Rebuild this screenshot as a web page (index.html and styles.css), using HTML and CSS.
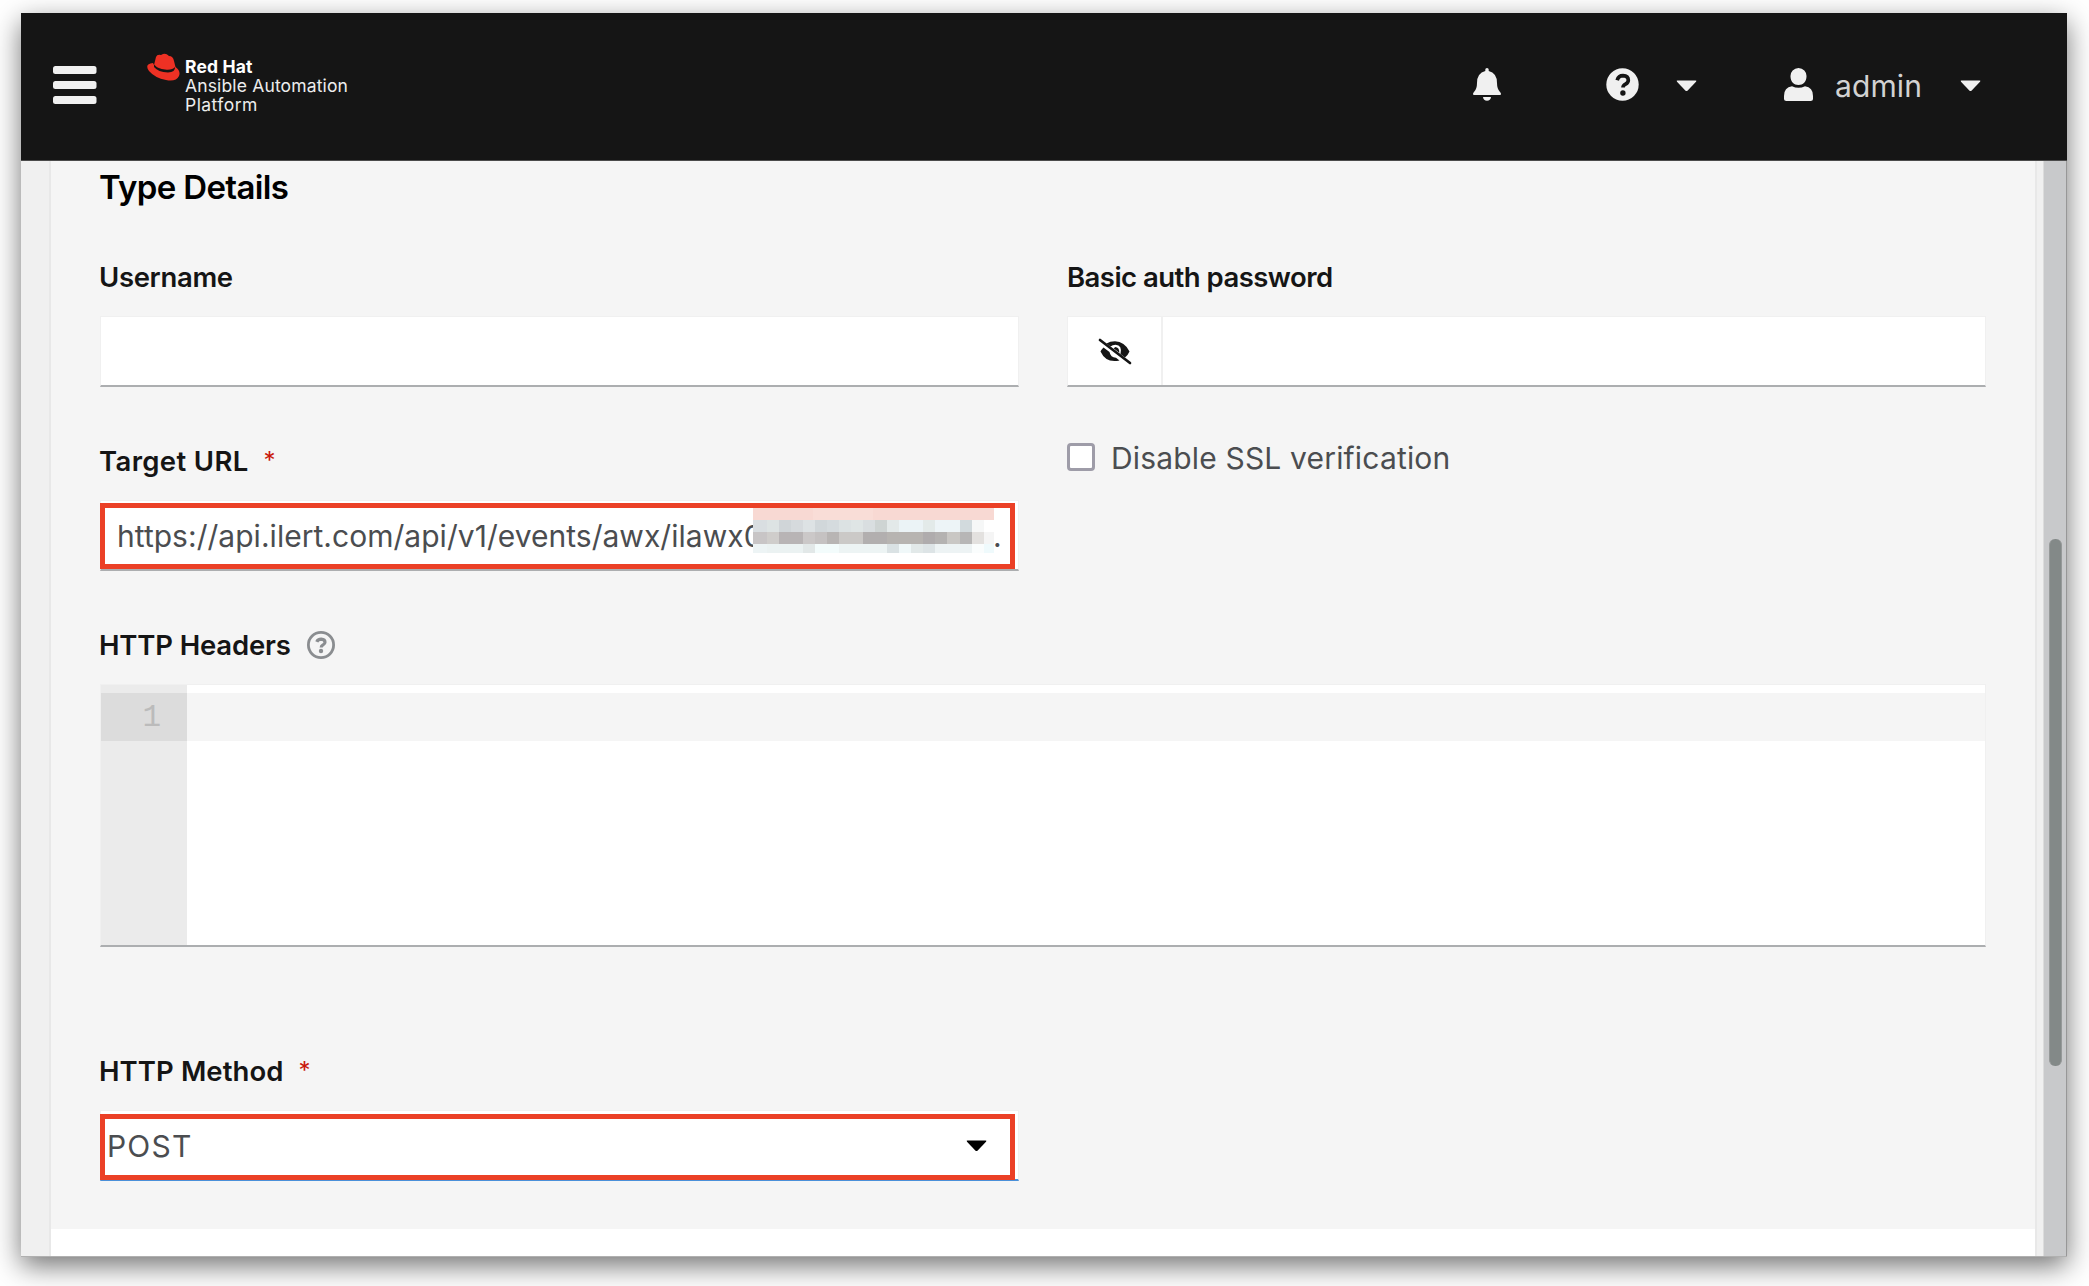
FILE: index.html
```html
<!DOCTYPE html>
<html lang="en">
<head>
<meta charset="utf-8">
<title>Red Hat Ansible Automation Platform</title>
<link rel="stylesheet" href="styles.css">
</head>
<body>
<div class="window">
  <header class="masthead">
    <svg class="menu" width="44" height="40" viewBox="0 0 44 40"><g fill="#f0f0f0"><rect y="1" width="43.500" height="8" rx="2.500"/><rect y="16" width="43.500" height="8" rx="2.500"/><rect y="31" width="43.500" height="8" rx="2.500"/></g></svg>
    <div class="brand">
      <svg class="hat" width="35" height="29" viewBox="0 0 35 29">
        <path fill="#ee3124" d="M8 12 L10 4 Q11 1 15 2 L17 1 Q20 0 23 3 Q27 3 28 8 L29.500 14 Q35 18 33 23 Q30 29 20 27 Q9 25 3 18 Q-2 11 7 10 Z"/>
        <path fill="#151515" d="M8 11.500 Q12 16 19 16.500 Q26 17.500 29 14 Q29.500 19 22 19.500 Q12 19 8 14 Z"/>
      </svg>
      <div class="brand-text"><b class="brand-name">Red Hat</b><span class="brand-line">Ansible Automation</span><span class="brand-last">Platform</span></div>
    </div>
    <div class="tools">
      <svg class="bell" width="28" height="33" viewBox="0 0 28 33"><path fill="#f0f0f0" d="M12.300 3V1.500Q12.300 0 14 0T15.700 1.500V3Q24 5 24 15Q24 21 27 24Q28 25 28 26Q28 27 27 27H1Q0 27 0 26Q0 25 1 24Q4 21 4 15Q4 5 12.300 3ZM10 29H18Q17.500 32.800 14 32.800T10 29Z"/></svg>
      <svg class="help" width="33" height="33" viewBox="0 0 33 33"><circle cx="16.500" cy="16.500" r="16.200" fill="#f0f0f0"/><path d="M11.200 12.200Q12.500 7.700 17 7.700Q22.300 8 22.300 12.200Q22.300 14.500 19.500 16.200Q17 17.500 17 19.600" fill="none" stroke="#151515" stroke-width="3.700"/><circle cx="16.900" cy="25" r="2.700" fill="#151515"/></svg>
      <svg class="caret caret-help" width="21" height="12" viewBox="0 0 21 12"><path fill="#f0f0f0" d="M1.500.5h18q1.500 0 .5 1.300l-8.300 8.700q-1.200 1-2.400 0L1 1.800Q0 .5 1.500.5z"/></svg>
      <svg class="user" width="29" height="33" viewBox="0 0 29 33"><path fill="#f0f0f0" d="M14.500 0a8 8 0 0 1 8 8.500c0 5-3.500 8.500-8 8.500s-8-3.500-8-8.500a8 8 0 0 1 8-8.500zM8 18.300q6.500 3 13 0q8 1 8 9.700v2.500q0 2.500-2.500 2.500h-24Q0 33 0 30.500V28q0-8.700 8-9.700z"/></svg>
      <span class="account">admin</span>
      <svg class="caret" width="21" height="12" viewBox="0 0 21 12"><path fill="#f0f0f0" d="M1.500.5h18q1.500 0 .5 1.300l-8.300 8.700q-1.200 1-2.400 0L1 1.800Q0 .5 1.500.5z"/></svg>
    </div>
  </header>
  <div class="viewport">
    <main class="panel">
      <section class="form">
        <h2 class="title">Type Details</h2>
        <div class="grid">
          <div class="field">
            <div class="label"><span class="l-username">Username</span></div>
            <div class="control"></div>
          </div>
          <div class="field">
            <div class="label"><span class="l-password">Basic auth password</span></div>
            <div class="control control-group">
              <div class="toggle"><svg width="34" height="27" viewBox="0 0 34 27"><path fill="#151515" d="M8.500 5.500Q12 3.300 17 3.300Q26.500 3.500 31.500 13.500Q30 17 27 19.500L22.500 16Q24.500 7 17.500 6.700Q14.500 6.800 12.500 8.600ZM17 9Q21.500 9.200 21.300 14.800L15.500 10.300Q17 10 17 9ZM5.500 9.500L11.500 14Q12.500 19.500 18 19.700L21.500 22.500Q8 25.500 2.500 13.500Q3.500 11.500 5.500 9.500Z"/><path d="M2 2L32 25" stroke="#151515" stroke-width="2.700" stroke-linecap="round"/></svg></div>
              <div class="secret"></div>
            </div>
          </div>
          <div class="field">
            <div class="label"><span class="l-target">Target URL</span><span class="required">*</span></div>
            <div class="control marked">
              <span class="url">https://api.ilert.com/api/v1/events/awx/ilawx0</span>
              <div class="redaction"><i class="r1"></i><i class="r2"></i><i class="r3"></i><i class="r4"></i></div>
              <span class="dot">.</span>
              <div class="highlight"></div>
            </div>
          </div>
          <div class="check"><span class="box"></span><span class="check-text">Disable SSL verification</span></div>
          <div class="field wide">
            <div class="label"><span class="l-headers">HTTP Headers</span>
              <svg class="hint" width="28" height="28" viewBox="0 0 28 28"><g fill="none" stroke="#8a8d90"><circle cx="14" cy="14" r="12.600" stroke-width="2.800"/><path d="M9.800 10.900Q10.800 8.200 14.200 8.200Q18 8.400 18 11.200Q18 12.700 16 13.900Q14.200 14.900 14.200 16.600" stroke-width="3.200"/></g><circle cx="14" cy="20" r="2.200" fill="#8a8d90"/></svg>
            </div>
            <div class="editor">
              <div class="gutter"><div class="line-number">1</div></div>
              <div class="code"><div class="active-line"></div></div>
            </div>
          </div>
          <div class="field method">
            <div class="label"><span class="l-method">HTTP Method</span><span class="required">*</span></div>
            <div class="control select marked">
              <span class="value">POST</span>
              <svg class="select-caret" width="21" height="12" viewBox="0 0 21 12"><path fill="#000" d="M1.500.5h18q1.500 0 .5 1.300l-8.300 8.700q-1.200 1-2.400 0L1 1.800Q0 .5 1.500.5z"/></svg>
              <div class="highlight"></div>
            </div>
          </div>
        </div>
      </section>
    </main>
    <div class="scrollbar"><div class="thumb"></div></div>
  </div>
</div>
</body>
</html>
```
FILE: styles.css
```css
* { box-sizing: border-box; }
body { margin: 0; height: 1286px; padding: 13px 22px 29px 21px; background: #fff; overflow: hidden; font-family: Inter, "Liberation Sans", sans-serif; color: #151515; }
svg { display: block; flex: none; }
span, b { white-space: nowrap; }
.window { height: 1244px; display: flex; flex-direction: column; background: #f0f0f0; box-shadow: 0 9px 26px rgba(0, 0, 0, .55); }
.masthead { height: 148px; flex: none; background: #151515; display: flex; align-items: center; padding: 0 86px 4px 32px; border-bottom: 1px solid #4b4b4b; }
.brand { display: flex; margin: 2px 0 0 49px; height: 66px; }
.brand-text { display: flex; flex-direction: column; margin: 4px 0 0 4px; color: #fff; font-size: 17.500px; line-height: 19px; }
.brand-name { font-weight: 700; letter-spacing: .15px; }
.brand-line, .brand-last { letter-spacing: .15px; color: #ededed; }
.brand-last { letter-spacing: .45px; }
.tools { margin-left: auto; display: flex; align-items: center; }
.help { margin-left: 105px; }
.caret-help { margin-left: 37px; }
.caret { margin-top: 2px; }
.user { margin-left: 87px; }
.account { margin: 2px 0 0 22px; width: 103px; color: #d2d2d2; font-size: 30px; line-height: 36px; letter-spacing: .1px; }
.tools > .caret:last-child { margin-left: 22px; }
.viewport { flex: 1; display: flex; border-bottom: 1px solid #b0b0b0; }
.panel { width: 1988px; margin-left: 28px; margin-right: 6px; background: #fff; border: solid #e8e8e8; border-width: 0 2px; }
.form { height: 1068px; background: #f5f5f5; padding: 6px 49px 0; }
.title { margin: 0 0 55px -1px; font-size: 33px; line-height: 40px; font-weight: 600; color: #000; letter-spacing: -.65px; }
.grid { display: grid; grid-template-columns: 919px 919px; column-gap: 48px; row-gap: 59px; }
.label { height: 30px; margin: 0 0 24px -1px; display: flex; align-items: center; font-size: 27.500px; line-height: 30px; font-weight: 600; }
.l-username { letter-spacing: -.33px; }
.l-password { margin-left: 1px; letter-spacing: -.53px; }
.l-target { letter-spacing: .35px; }
.l-headers { letter-spacing: -.17px; }
.l-method { letter-spacing: .08px; }
.required { margin-left: 15px; color: #c9190b; font-size: 24px; font-weight: 400; }
.control { height: 71px; display: flex; align-items: center; background: #fff; border: 1px solid #f0f0f0; border-bottom: 2px solid #acaeb0; position: relative; }
.control-group { align-items: stretch; }
.toggle { width: 95px; display: flex; align-items: center; justify-content: center; border-right: 2px solid #f0f0f0; }
.secret { flex: 1; }
.url, .value, .dot, .check-text { font-size: 30px; line-height: 36px; color: #4b4d50; }
.url { margin: 2px 0 0 16px; width: 636px; letter-spacing: .03px; }
.dot { margin-top: 2px; margin-left: -1px; }
.value { letter-spacing: 1.200px; margin-top: 2px; }
.redaction { position: relative; width: 241px; height: 45px; margin-top: -9px; display: flex; flex-direction: column; background: #fff; }
.redaction i { display: block; height: 12px; }
.redaction .r1 { height: 12px; background: linear-gradient(90deg, #f8d9d3 0 60px, #f9ddd7 60px 120px, #f8d9d3 120px); }
.redaction .r2 { background: linear-gradient(90deg, #d9dee1 0 14px, #dde3e3 14px 26px, #d0d5d8 26px 38px, #d6dadd 38px 50px, #dde2e4 50px 62px, #d1d7da 62px 74px, #d5dbde 74px 86px, #dce2e3 86px 98px, #dfe5e5 98px 110px, #d9dee0 110px 122px, #ced4d3 122px 134px, #e3e9e9 134px 146px, #ebf3f6 146px 170px, #e3eae9 170px 182px, #edf4f7 182px 207px, #d2dadd 207px 219px, #f6f7f7 219px 231px, #fff 231px); }
.redaction .r3 { background: linear-gradient(90deg, #c8c5c6 0 14px, #cfcdcb 14px 26px, #b8b4b5 26px 50px, #cbc8c8 50px 62px, #c5c2c2 62px 74px, #b8b5b4 74px 86px, #cbc9c7 86px 110px, #b2afaf 110px 134px, #b7b4b1 134px 170px, #afacad 170px 182px, #b4b2b1 182px 194px, #c9c7c4 194px 207px, #b7b6b6 207px 219px, #e3e1df 219px 231px, #f5f5f5 231px); }
.redaction .r4 { height: 9px; background: linear-gradient(90deg, #edf4f5 0 14px, #ebf2f2 14px 50px, #e2e8e8 50px 62px, #f3fcfc 62px 86px, #edf4f4 86px 134px, #dae2e4 134px 146px, #f0f8f9 146px 158px, #e2e9e9 158px 170px, #dde4e6 170px 182px, #edf3f4 182px 219px, #fafdfd 219px 231px, #effafc 231px); }
.highlight { position: absolute; left: -1px; top: 2px; width: 915px; height: 66px; border: 5px solid #eb4026; }
.select .highlight { top: 3px; }
.check { height: 28px; margin-top: -3px; display: flex; align-items: center; }
.box { width: 28px; height: 28px; background: #fff; border: 3px solid #9e9ca8; border-radius: 4px; }
.check-text { margin: 2px 0 0 16px; letter-spacing: .17px; }
.wide { grid-column: 1 / 3; }
.hint { margin-left: 16px; }
.editor { height: 263px; display: flex; background: #fff; border: 1px solid #f0f0f0; border-bottom: 2px solid #acaeb0; }
.gutter { width: 86px; background: #ebebeb; padding-top: 8px; }
.line-number { height: 48px; background: #dcdcdc; padding-right: 26px; text-align: right; color: #bbb; font: 31px/50px "Liberation Mono", monospace; }
.code { flex: 1; padding-top: 8px; }
.active-line { height: 48px; background: #f5f5f5; }
.method { margin-top: 50px; }
.select { justify-content: space-between; padding: 0 31px 0 6px; border-bottom-color: #4a90d9; }
.select-caret { margin-top: 2px; }
.scrollbar { width: 24px; background: #c8c9cb; border-left: 1px solid #dcdcdc; border-right: 1px solid #979797; padding: 378px 4px 0 5px; }
.thumb { height: 527px; border-radius: 6px; background: #838988; border: solid #969999; border-width: 0 1px; }
```
